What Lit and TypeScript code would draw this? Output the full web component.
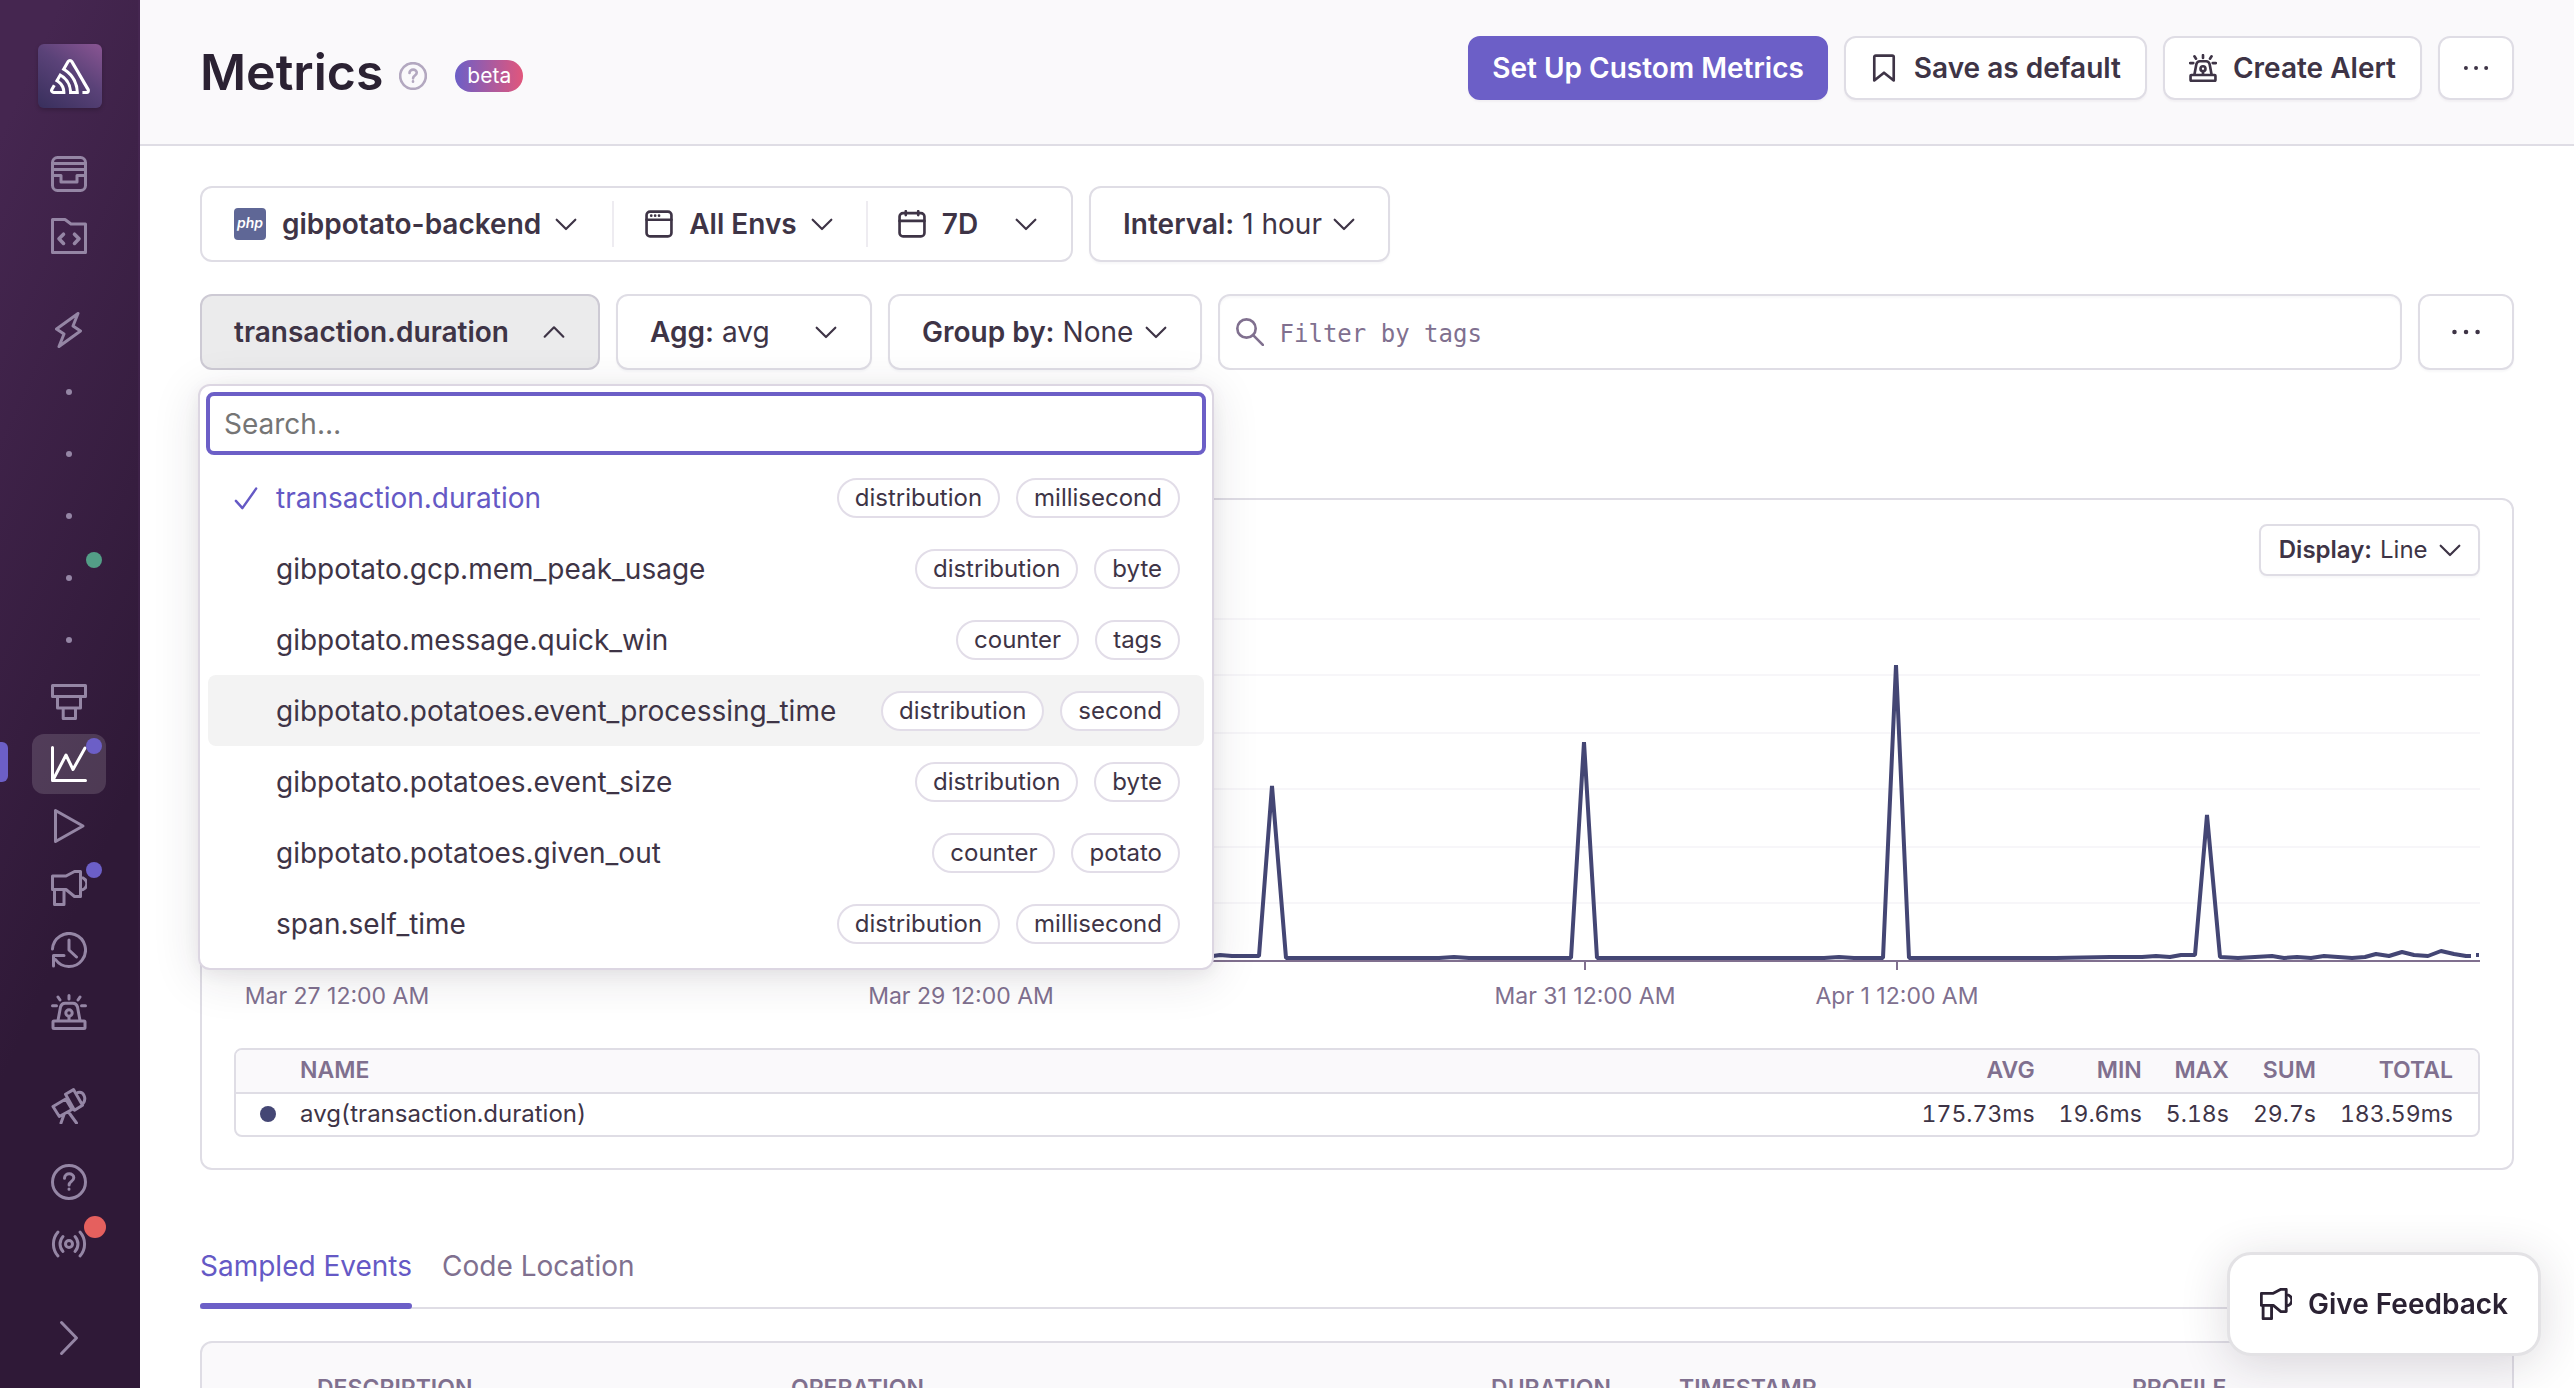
import { LitElement, html, css, svg } from "lit";
import { customElement } from "lit/decorators.js";
import { classMap } from "lit/directives/class-map.js";

const ICONS: Record<string, any> = {
  issues: svg`<rect x="1.5" y="1.5" width="33" height="33" rx="5"/><path d="M1.5 7.5h33M1.5 13.5h33M1.5 19.5H10v6.5h16v-6.5h8.5"/>`,
  projects: svg`<path d="M1.5 34.5v-33H14l6 4.5h14.5v28.5z"/><path stroke-width="3.6" d="M12.5 16.2 8 20.8l4.5 4.6M23.5 16.2 28 20.8l-4.5 4.6"/>`,
  lightning: svg`<path d="M27 1.5 5.5 17l7.5 5-5 12.5L29.5 19 22 14z"/>`,
  funnel: svg`<path d="M1.5 1.5h33v11h-33zM6.5 12.5h23V24h-23zM12.2 24h12.3v10.5H12.2z"/>`,
  metrics: svg`<path d="M1.5 1.5v33h33M2 34 15 9l7 14.5L34 2"/>`,
  play: svg`<path d="M4.5 2.5v31L32 18z"/>`,
  megaphone: svg`<path d="M1.5 6H15l8.5-4.5h6v25h-6L15 19.5H1.5zM3.5 20v14.5H13V20M29.5 7.5a6.3 6.3 0 0 1 0 12.6"/>`,
  history: svg`<path d="M1.5 17A16.5 16.5 0 1 1 4.5 27.5M13 23.5H2.5V34M18 8v10l7.5 7"/>`,
  siren: svg`<rect x="2" y="27" width="32" height="7.5" rx="1"/><path d="M7 26.5 9.5 13q1-3.7 4.5-3.7h8q3.5 0 4.5 3.7L29 26.5M18 22.5v4M18 1.5V5M7 3l2 3M29 3l-2 3M1.5 11.7h4M30.5 11.7h4"/><circle cx="18" cy="19" r="3.2"/>`,
  telescope: svg`<path d="M2 18.5 14.7 11l6.3 10.5L8.3 28.5zM14.5 6.2 22.5 1.6l9 15.6-8 5zM27 4.5c5.5-1.5 9 6 5 11M13 26.5 10 35M17.5 24 25.5 35"/>`,
  help: svg`<circle cx="18" cy="18" r="16.5"/><path d="M13.5 14.2c0-6 9.5-5.5 9.3-.4-.1 3.7-4.7 3.4-4.7 7.2M18 25v.3"/>`,
  broadcast: svg`<circle cx="18" cy="18" r="3.5"/><path d="M12 10.5a11 11 0 0 0 0 15M7 6a18 18 0 0 0 0 24M24 10.5a11 11 0 0 1 0 15M29 6a18 18 0 0 1 0 24"/>`,
  expand: svg`<path d="m10.500 2.500 15 15.500-15 15.500"/>`,
  down: svg`<path d="m6 12.500 12 12 12-12"/>`,
  up: svg`<path d="m6 24 12-12 12 12"/>`,
  check: svg`<path d="M4 22l9 10L32 5"/>`,
  bookmark: svg`<path d="M5.500 34V4q0-2 2-2h21q2 0 2 2v30L18 24z"/>`,
  window: svg`<rect x="2" y="2" width="32" height="32" rx="4.5"/><path d="M2 12.500h32M8 7.300h.1M13 7.300h.1M18 7.300h.1"/>`,
  calendar: svg`<rect x="2" y="4" width="32" height="30" rx="4.5"/><path d="M2 14h32M10 1.500v5M26 1.500v5"/>`,
  search: svg`<circle cx="13.5" cy="13.5" r="11.8"/><path d="m22 22 12.500 12.500"/>`,
  more: svg`<path d="M5 18h.1M18 18h.1M31 18h.1" stroke-width="5"/>`,
};

const icon = (name: string, cls = "") =>
  html`<svg class="icon ${cls}" viewBox="0 0 36 36" aria-hidden="true">${ICONS[name]}</svg>`;

interface NavItem { name: string; label: string; dot?: string; active?: boolean; }

const NAV: { cls: string; items: NavItem[] }[] = [
  { cls: "", items: [
    { name: "issues", label: "Issues" },
    { name: "projects", label: "Projects" },
  ] },
  { cls: "", items: [
    { name: "lightning", label: "Performance" },
    { name: "", label: "Requests" },
    { name: "", label: "Queries" },
    { name: "", label: "Resources" },
    { name: "", label: "App Starts", dot: "green" },
    { name: "", label: "Web Vitals" },
    { name: "funnel", label: "Profiling" },
    { name: "metrics", label: "Metrics", dot: "purple", active: true },
    { name: "play", label: "Replays" },
    { name: "megaphone", label: "User Feedback", dot: "purple" },
    { name: "history", label: "Crons" },
    { name: "siren", label: "Alerts" },
  ] },
  { cls: "", items: [{ name: "telescope", label: "Discover" }] },
  { cls: "foot", items: [
    { name: "help", label: "Help" },
    { name: "broadcast", label: "What's new", dot: "red" },
  ] },
  { cls: "", items: [{ name: "expand", label: "Expand" }] },
];

const METRICS = [
  { name: "transaction.duration", tags: ["distribution", "millisecond"], selected: true },
  { name: "gibpotato.gcp.mem_peak_usage", tags: ["distribution", "byte"] },
  { name: "gibpotato.message.quick_win", tags: ["counter", "tags"] },
  { name: "gibpotato.potatoes.event_processing_time", tags: ["distribution", "second"], focused: true },
  { name: "gibpotato.potatoes.event_size", tags: ["distribution", "byte"] },
  { name: "gibpotato.potatoes.given_out", tags: ["counter", "potato"] },
  { name: "span.self_time", tags: ["distribution", "millisecond"] },
];

const CHART_W = 2246;
const CHART_H = 354;
const GRID = [1, 57, 115, 171, 229, 285];
const TICKS = [
  { x: 103, label: "Mar 27 12:00 AM" },
  { x: 727, label: "Mar 29 12:00 AM" },
  { x: 1351, label: "Mar 31 12:00 AM" },
  { x: 1663, label: "Apr 1 12:00 AM" },
];
const SERIES = [
  [0, 340], [90, 340], [103, 180], [116, 340], [402, 340], [415, 220], [428, 340],
  [714, 340], [727, 200], [740, 340], [960, 339], [979, 338], [986, 337], [998, 338], [1025, 338],
  [1038, 168], [1052, 340], [1205, 340], [1220, 339], [1235, 340], [1337, 340],
  [1350, 124], [1363, 340], [1590, 340], [1605, 339], [1620, 340], [1649, 340],
  [1662, 47], [1675, 340], [1822, 340], [1876, 339], [1908, 339], [1922, 338], [1936, 339],
  [1947, 337], [1961, 337], [1973, 197], [1986, 339], [2004, 340], [2038, 338], [2050, 340],
  [2063, 339], [2077, 340], [2090, 338], [2118, 340], [2131, 339], [2142, 336], [2155, 338],
  [2168, 334], [2180, 337], [2194, 338], [2207, 333], [2220, 336], [2232, 338], [2237, 338],
];

const STATS = [
  ["AVG", "175.73ms"], ["MIN", "19.6ms"], ["MAX", "5.18s"], ["SUM", "29.7s"], ["TOTAL", "183.59ms"],
];

@customElement("app-root")
export class AppRoot extends LitElement {
  static styles = css`
    :host {
      display: block;
      font-family: Inter, "Liberation Sans", sans-serif;
      font-size: 28px;
      line-height: 36px;
      color: #3e3446;
      --line: #dfdde5;
      --gray: #80708f;
      --purple: #6c5fc7;
    }
    * { box-sizing: border-box; }
    button, input, select {
      font: inherit; color: inherit; margin: 0; padding: 0; border: 0; background: none; outline: none;
    }
    select { appearance: none; }
    a { color: inherit; text-decoration: none; }
    .icon {
      width: 36px; height: 36px; flex: none; fill: none; stroke: currentColor;
      stroke-width: 3; stroke-linecap: round; stroke-linejoin: round;
    }
    .icon.s28 { width: 28px; height: 28px; stroke-width: 3.4; }
    .icon.s32 { width: 32px; height: 32px; stroke-width: 3.2; }
    .icon.chev { width: 28px; height: 28px; stroke-width: 2.8; }
    .icon.tick { width: 26px; height: 26px; stroke-width: 3.4; }

    .app { display: flex; height: 100vh; overflow: hidden; background: #fff; }

    .side {
      flex: none; width: 140px; padding: 44px 0 19px; border-right: 2px solid transparent;
      display: flex; flex-direction: column; align-items: center;
      background: linear-gradient(294deg, #2f1937 36%, #452650 92%);
      color: #9586a5;
    }
    .logo {
      flex: none; width: 64px; height: 64px; border-radius: 6px; margin: 0 0 3px 2px;
      display: grid; place-items: center; box-shadow: 0 2px 4px rgba(0, 0, 0, 0.2);
      background: linear-gradient(35deg, #382f5c, #5a4278 55%, #8a5593);
    }
    .logo svg { width: 40px; height: 35px; fill: #fff; }
    .group { display: flex; flex-direction: column; width: 100%; margin-top: 32px; }
    .group.foot { margin-top: auto; }
    .nav { position: relative; height: 62px; display: grid; place-items: center; }
    .pill { width: 74px; height: 60px; border-radius: 12px; display: grid; place-items: center; }
    .active .pill { background: rgba(255, 255, 255, 0.14); color: #fff; }
    .active::before {
      content: ""; position: absolute; left: 0; top: 9px; width: 8px; height: 40px;
      border-radius: 0 6px 6px 0; background: var(--purple);
    }
    .bullet { width: 6px; height: 6px; border-radius: 50%; background: currentColor; }
    .dot { position: absolute; left: 86px; top: 5px; width: 16px; height: 16px; border-radius: 50%; }
    .green { background: #539e87; }
    .purple { background: var(--purple); }
    .red { left: 84px; top: 3px; width: 22px; height: 22px; background: #e5605e; }

    .main { flex: 1; min-width: 0; display: flex; flex-direction: column; }
    .head {
      flex: none; height: 146px; padding: 0 60px 8px; border-bottom: 2px solid var(--line);
      background: #faf9fb; display: flex; align-items: center; gap: 16px;
    }
    h1 { margin: 0; font-size: 50px; line-height: 60px; font-weight: 600; color: #2b2233; }
    .title { display: flex; align-items: center; gap: 16px; margin: 8px auto 0 0; }
    .title .icon { color: #b3a8c0; margin-top: 8px; }
    .beta {
      height: 32px; padding: 0 12px; margin: 8px 0 0 12px; border-radius: 16px; font-size: 21px; line-height: 32px;
      color: #fff; background: linear-gradient(90deg, #6c5fc7, #e1567c);
    }
    .btn {
      height: 64px; padding: 0 24px; border: 2px solid var(--line); border-radius: 12px; background: #fff;
      display: flex; align-items: center; justify-content: center; gap: 16px; font-weight: 600; white-space: nowrap;
      box-shadow: 0 2px 2px rgba(43, 34, 51, 0.04);
    }
    .btn.primary { padding: 0 22px; background: var(--purple); border-color: var(--purple); color: #fff; }
    .btn.only { width: 76px; padding: 0; }

    .body { padding: 40px 60px 0; display: flex; flex-direction: column; }
    .row { display: flex; gap: 16px; margin-bottom: 32px; }
    .field {
      height: 76px; border: 2px solid var(--line); border-radius: 12px; background: #fff;
      display: flex; align-items: center; padding: 0 30px 0 32px; gap: 8px; white-space: nowrap; flex: none;
      box-shadow: 0 2px 2px rgba(43, 34, 51, 0.03);
    }
    .field .chev { margin-left: auto; }
    .strong { font-weight: 600; }
    .filters { padding: 0; gap: 0; box-shadow: none; }
    .filters button { display: flex; align-items: center; gap: 16px; height: 72px; font-weight: 600; }
    .filters .chev { margin-left: -5px; }
    .filters i { width: 2px; height: 46px; background: #eeecf1; }
    .project { padding: 0 32px; }
    .envs { padding: 0 30px 0 31px; }
    .dates { padding: 0 31px 0 30px; }
    .filters .dates .chev { margin-left: 18px; }
    .php {
      width: 32px; height: 32px; border-radius: 4px; background: #5f6796; color: #fff;
      font: italic 600 14px/30px Inter, sans-serif; text-align: center;
    }
    .picker { position: relative; flex: none; }
    .open { background: #ebebec; border-color: #cdcad4; box-shadow: none; min-width: 400px; }
    .agg { min-width: 256px; }
    .search { flex: 1; min-width: 0; padding: 0 16px; gap: 16px; box-shadow: inset 0 2px 2px rgba(43, 34, 51, 0.03); }
    .search .icon { color: var(--gray); }
    .search input { flex: 1; min-width: 0; padding-top: 4px; font: 24px/32px "DejaVu Sans Mono", "Liberation Mono", monospace; }
    .search input::placeholder { color: var(--gray); opacity: 1; }
    .dots { justify-content: center; width: 96px; padding: 0; }

    .menu {
      position: absolute; z-index: 2; left: -2px; top: 90px; width: 1016px; padding: 6px 6px 9px;
      border: 2px solid #dcd6e2; border-radius: 12px; background: #fff;
      box-shadow: 0 8px 48px rgba(43, 34, 51, 0.12), 0 4px 16px rgba(43, 34, 51, 0.06);
    }
    .menu input {
      display: block; width: 100%; height: 63px; padding: 0 14px; border: 4px solid var(--purple); border-radius: 8px;
    }
    .menu input::placeholder { color: #757575; opacity: 1; }
    ul { list-style: none; margin: 7px 2px 0; padding: 0; }
    .opt { height: 71px; border-radius: 8px; display: flex; align-items: center; padding: 0 24px; gap: 16px; }
    .opt .slot { width: 28px; height: 28px; flex: none; display: grid; place-items: center; }
    .opt .name { margin-right: auto; }
    .chosen { color: #6559c5; }
    .focused { background: #f3f3f3; }
    .chip {
      height: 40px; padding: 0 16px; border: 2px solid #e2dde8; border-radius: 20px; background: #fff;
      font-size: 24px; line-height: 36px; color: #3e3446;
    }

    .panel { border: 2px solid var(--line); border-radius: 12px; margin-top: 96px; padding: 24px 32px 31px; }
    .display { height: 52px; width: max-content; margin-left: auto; padding: 0 14px 0 18px; border-radius: 8px; font-size: 24px; }
    .chart { margin-top: 42px; }
    .plot { display: block; width: 100%; height: 354px; }
    .plot * { vector-effect: non-scaling-stroke; fill: none; }
    .grid { stroke: #f7f6f9; stroke-width: 2; }
    .axis { stroke: var(--gray); stroke-width: 2; }
    .series { stroke: #444674; stroke-width: 4; stroke-linejoin: bevel; }
    .labels { position: relative; height: 28px; margin-top: 10px; }
    .labels span {
      position: absolute; width: 240px; margin-left: -120px; text-align: center;
      font-size: 23px; line-height: 28px; color: var(--gray);
    }
    .legend {
      width: 100%; margin-top: 38px; border: 2px solid var(--line); border-radius: 8px; border-spacing: 0;
      font-size: 23px; line-height: 28px;
    }
    .legend th, .legend td { text-align: right; white-space: nowrap; }
    .legend th {
      background: #faf9fb; color: var(--gray); font-weight: 600;
      padding: 6px 0 8px 24px; border-bottom: 2px solid var(--line);
    }
    .legend td { padding: 6px 0 7px 24px; font-variant-numeric: tabular-nums; }
    .legend td.wide { font-size: 24px; }
    .legend th:first-child { border-top-left-radius: 6px; }
    .legend th:last-child { border-top-right-radius: 6px; }
    .legend th:last-child, .legend td:last-child { padding-right: 25px; }
    .legend .mark span { display: block; width: 16px; height: 16px; border-radius: 50%; background: #444674; }
    .legend .wide { text-align: left; width: 100%; }

    .tabs { display: flex; gap: 30px; margin-top: 78px; border-bottom: 2px solid var(--line); color: var(--gray); }
    .tab { padding-bottom: 19px; border-bottom: 6px solid transparent; margin-bottom: -2px; }
    .tab.on { color: #6559c5; position: relative; }
    .tab.on::after {
      content: ""; position: absolute; left: 0; right: 0; bottom: -6px; height: 6px; border-radius: 3px; background: var(--purple);
    }
    .samples {
      width: 100%; margin-top: 32px; border: 2px solid var(--line); border-radius: 12px; border-spacing: 0; table-layout: fixed;
      background: #faf9fb; color: var(--gray); font-size: 23px; line-height: 28px;
    }
    .samples th { text-align: left; font-weight: 600; padding: 31px 0; }
    .samples th:first-child { padding-left: 115px; width: 589px; }
    .samples .op { width: 530px; }
    .samples .du { width: 358px; text-align: right; padding-right: 68px; }
    .samples .ts { width: 453px; }

    .feedback {
      position: fixed; z-index: 3; right: 33px; bottom: 32px; width: 314px; height: 104px; border: 3px solid #e3e2e5; border-radius: 24px;
      background: #fff; color: #2b2233; display: flex; align-items: center; justify-content: center; gap: 16px; font-weight: 600;
      box-shadow: 0 8px 48px rgba(43, 34, 51, 0.16);
    }
  `;

  private renderNav(item: NavItem) {
    return html`<a class=${classMap({ nav: true, active: !!item.active })} href="#" aria-label=${item.label}>
      <span class="pill">${item.name ? icon(item.name) : html`<span class="bullet"></span>`}</span>
      ${item.dot ? html`<span class="dot ${item.dot}"></span>` : ""}
    </a>`;
  }

  private renderSelect(label: string, value: string, cls = "") {
    return html`<label class="field ${cls}">
      <span class="strong">${label}</span>
      <select><option>${value}</option></select>
      ${icon("down", "chev")}
    </label>`;
  }

  private renderMenu() {
    return html`<div class="menu">
      <input type="text" placeholder="Search…" aria-label="Search metrics" />
      <ul role="listbox" aria-label="Metric">
        ${METRICS.map((m) => html`<li role="option" aria-selected=${m.selected ? "true" : "false"}
          class=${classMap({ opt: true, chosen: !!m.selected, focused: !!m.focused })}>
          <span class="slot">${m.selected ? icon("check", "tick") : ""}</span>
          <span class="name">${m.name}</span>
          ${m.tags.map((t) => html`<span class="chip">${t}</span>`)}
        </li>`)}
      </ul>
    </div>`;
  }

  private renderChart() {
    const d = "M" + SERIES.map(([x, y]) => `${x} ${y}`).join("L");
    return html`<div class="chart">
      <svg class="plot" viewBox="0 0 ${CHART_W} ${CHART_H}" preserveAspectRatio="none" role="img" aria-label="avg(transaction.duration)">
        ${GRID.map((y) => svg`<path class="grid" d="M0 ${y}H${CHART_W}"/>`)}
        <path class="axis" d="M0 343H${CHART_W}"/>
        ${TICKS.map((t) => svg`<path class="axis" d="M${t.x} 344V352"/>`)}
        <path class="series" d=${d} />
        <path class="series" d="M2242 337H2245" />
      </svg>
      <div class="labels">
        ${TICKS.map((t) => html`<span style="left:${(t.x / CHART_W) * 100}%">${t.label}</span>`)}
      </div>
    </div>`;
  }

  render() {
    return html`<div class="app">
      <nav class="side" aria-label="Primary">
        <a class="logo" href="#" aria-label="Home">
          <svg viewBox="0 0 50 44"><path d="M29 2.260a4.670 4.670 0 0 0-8 0l-6.580 11.270A32.210 32.210 0 0 1 32.170 40.190h-4.620A27.680 27.680 0 0 0 12.090 17.470L6 28a15.920 15.920 0 0 1 9.230 12.170H4.620A.76.76 0 0 1 4 39.060l2.940-5a10.740 10.740 0 0 0-3.360-1.900l-2.910 5a4.540 4.540 0 0 0 1.690 6.240A4.660 4.660 0 0 0 4.620 44h14.530a19.400 19.400 0 0 0-8-17.310l2.310-4A23.870 23.870 0 0 1 23.760 44h12.310a35.880 35.880 0 0 0-16.410-31.800l4.670-8a.77.77 0 0 1 1.050-.27c.53.290 20.290 34.770 20.660 35.170a.76.76 0 0 1-.68 1.130H40.600q.090 1.910 0 3.810h4.780A4.590 4.590 0 0 0 50 39.430a4.490 4.490 0 0 0-.62-2.280z"/></svg>
        </a>
        ${NAV.map((g) => html`<div class="group ${g.cls}">${g.items.map((i) => this.renderNav(i))}</div>`)}
      </nav>
      <main class="main">
        <header class="head">
          <div class="title"><h1>Metrics</h1>${icon("help", "s28")}<span class="beta">beta</span></div>
          <button class="btn primary">Set Up Custom Metrics</button>
          <button class="btn">${icon("bookmark", "s28")}Save as default</button>
          <button class="btn">${icon("siren", "s28")}Create Alert</button>
          <button class="btn only" aria-label="More actions">${icon("more", "s28")}</button>
        </header>
        <div class="body">
          <div class="row">
            <div class="field filters">
              <button class="project" aria-haspopup="listbox"><span class="php">php</span>gibpotato-backend ${icon("down", "chev")}</button>
              <i></i>
              <button class="envs" aria-haspopup="listbox">${icon("window", "s28")}All Envs ${icon("down", "chev")}</button>
              <i></i>
              <button class="dates" aria-haspopup="listbox">${icon("calendar", "s28")}7D ${icon("down", "chev")}</button>
            </div>
            ${this.renderSelect("Interval:", "1 hour")}
          </div>
          <div class="row">
            <div class="picker">
              <button class="field open" aria-haspopup="listbox" aria-expanded="true"><span class="strong">transaction.duration</span>${icon("up", "chev")}</button>
              ${this.renderMenu()}
            </div>
            ${this.renderSelect("Agg:", "avg", "agg")}
            ${this.renderSelect("Group by:", "None")}
            <label class="field search">${icon("search", "s28")}<input type="text" placeholder="Filter by tags" aria-label="Filter by tags" /></label>
            <button class="field dots" aria-label="More options">${icon("more", "s32")}</button>
          </div>
          <section class="panel">
            ${this.renderSelect("Display:", "Line", "display")}
            ${this.renderChart()}
            <table class="legend">
              <thead><tr><th class="mark"></th><th class="wide">NAME</th>${STATS.map(([h]) => html`<th>${h}</th>`)}</tr></thead>
              <tbody><tr><td class="mark"><span></span></td><td class="wide">avg(transaction.duration)</td>${STATS.map(([, v]) => html`<td>${v}</td>`)}</tr></tbody>
            </table>
          </section>
          <nav class="tabs" aria-label="Details">
            <a class="tab on" href="#">Sampled Events</a>
            <a class="tab" href="#">Code Location</a>
          </nav>
          <table class="samples">
            <thead><tr><th>DESCRIPTION</th><th class="op">OPERATION</th><th class="du">DURATION</th><th class="ts">TIMESTAMP</th><th>PROFILE</th></tr></thead>
          </table>
        </div>
      </main>
      <button class="feedback">${icon("megaphone", "s32")}Give Feedback</button>
    </div>`;
  }
}
